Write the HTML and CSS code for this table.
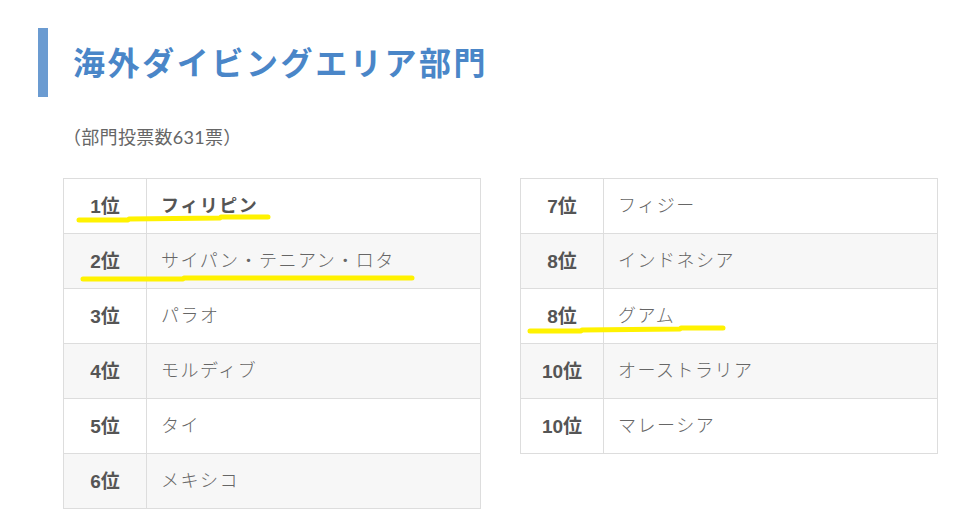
FILE: index.html
```html
<!DOCTYPE html>
<html lang="ja">
	<head>
		<meta charset="UTF-8" />
		<meta name="viewport" content="width=device-width, initial-scale=1.0" />
		<title>海外ダイビングエリア部門</title>
		<link rel="stylesheet" href="styles.css">
	</head>
	<body>
		<div class="section">
			<h2 class="section-title">海外ダイビングエリア部門</h2>
			<p class="votes">（部門投票数631票）</p>
			<div class="tables">
				<table class="rank-table">
					<tr class="top"><td class="rank">1位</td><td class="name">フィリピン</td></tr>
					<tr><td class="rank">2位</td><td class="name">サイパン・テニアン・ロタ</td></tr>
					<tr><td class="rank">3位</td><td class="name">パラオ</td></tr>
					<tr><td class="rank">4位</td><td class="name">モルディブ</td></tr>
					<tr><td class="rank">5位</td><td class="name">タイ</td></tr>
					<tr><td class="rank">6位</td><td class="name">メキシコ</td></tr>
				</table>
				<table class="rank-table">
					<tr><td class="rank">7位</td><td class="name">フィジー</td></tr>
					<tr><td class="rank">8位</td><td class="name">インドネシア</td></tr>
					<tr><td class="rank">8位</td><td class="name">グアム</td></tr>
					<tr><td class="rank">10位</td><td class="name">オーストラリア</td></tr>
					<tr><td class="rank">10位</td><td class="name">マレーシア</td></tr>
				</table>
				<!-- marker underlines -->
				<svg class="marks" width="875" height="330" viewBox="0 0 875 330">
					<polyline points="16,42 65,42 66,41 157,40 158,39 205,39" />
					<polyline points="20,101 120,101 121,100 349,100" />
					<polyline points="467,153 518,153 519,152 617,151 618,150 660,150" />
				</svg>
			</div>
		</div>
	</body>
</html>
```

FILE: styles.css
```css
body {
	margin: 0;
	background: #fff;
	font-family: "Lato", "Noto Sans CJK JP", sans-serif;
	color: #666;
}

.section {
	padding: 28px 0 0 38px;
}

.section-title {
	margin: 0;
	height: 69px;
	line-height: 66px;
	padding-left: 25px;
	border-left: 10px solid #6b9bd1;
	font-family: "Noto Sans CJK JP", sans-serif;
	font-size: 32px;
	font-weight: bold;
	letter-spacing: 2.6px;
	color: #4a86c8;
}

.votes {
	margin: 27px 0 0 25px;
	font-family: "Lato", "Noto Sans CJK JP", sans-serif;
	font-size: 18px;
	line-height: 26px;
	letter-spacing: 0.3px;
	color: #666;
}

.tables {
	position: relative;
	display: flex;
	gap: 39px;
	align-items: flex-start;
	margin: 28px 0 0 25px;
}

.rank-table {
	width: 418px;
	border-collapse: collapse;
	border: 1px solid #ddd;
}

.rank-table td {
	height: 50px;
	padding: 0 0 4px;
	border: 1px solid #ddd;
	font-size: 18px;
}

.rank-table tr:nth-child(even) td {
	background: #f7f7f7;
}

.rank-table .rank {
	width: 82px;
	text-align: center;
	font-family: "Liberation Sans", "Noto Sans CJK JP", sans-serif;
	font-weight: bold;
	font-size: 19px;
	color: #555;
}

.rank-table .name {
	padding-left: 14px;
	font-family: "Noto Sans CJK JP", sans-serif;
	font-weight: 300;
	letter-spacing: 1.5px;
	color: #666;
}

.rank-table .top .name {
	font-weight: bold;
	color: #555;
}

.marks {
	position: absolute;
	left: 0;
	top: 0;
	pointer-events: none;
}

.marks polyline {
	fill: none;
	stroke: #fff200;
	stroke-width: 5;
	stroke-linecap: round;
	stroke-linejoin: round;
}
```
